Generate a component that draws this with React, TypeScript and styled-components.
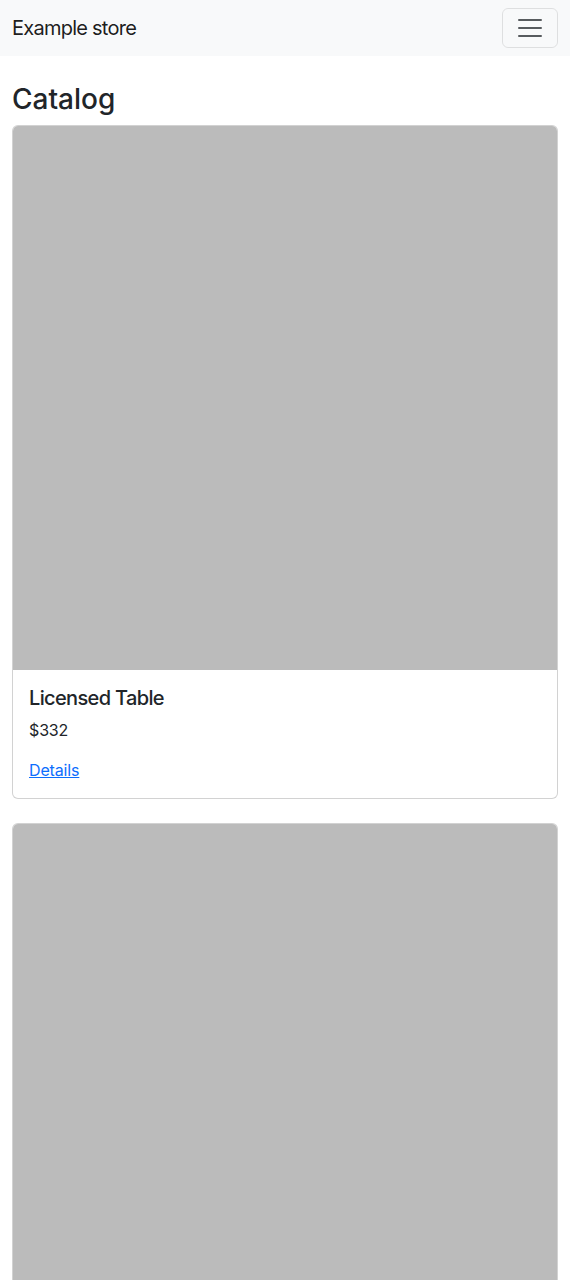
import React from "react";
import styled, { createGlobalStyle } from "styled-components";

type Product = {
  id: number;
  name: string;
  price: number;
};

const products: Product[] = [
  { id: 1, name: "Licensed Table", price: 332 },
  { id: 2, name: "Handcrafted Chair", price: 184 },
];

const GlobalStyle = createGlobalStyle`
  * {
    box-sizing: border-box;
  }
  body {
    margin: 0;
    font-family: Inter, "Liberation Sans", sans-serif;
    font-size: 16px;
    line-height: 1.5;
    letter-spacing: -0.15px;
    color: #212529;
    background: #ffffff;
  }
`;

const Navbar = styled.nav`
  background: #f8f9fa;
  padding: 8px 12px;
  display: flex;
  align-items: center;
  justify-content: space-between;
`;

const Brand = styled.a`
  font-size: 20px;
  line-height: 30px;
  letter-spacing: -0.75px;
  padding: 5px 0;
  color: rgba(0, 0, 0, 0.9);
  text-decoration: none;
`;

const Toggler = styled.button`
  width: 56px;
  height: 40px;
  padding: 4px 12px;
  background: transparent;
  border: 1px solid rgba(0, 0, 0, 0.1);
  border-radius: 6px;
  display: flex;
  align-items: center;
  justify-content: center;
  cursor: pointer;
`;

const Main = styled.main`
  padding: 27px 12px 0;
`;

const Heading = styled.h2`
  margin: 0 0 8px;
  font-size: 28px;
  font-weight: 500;
  line-height: 1.2;
  letter-spacing: 0;
`;

const Card = styled.div`
  border: 1px solid rgba(0, 0, 0, 0.175);
  border-radius: 6px;
  overflow: hidden;
  margin-bottom: 24px;
  background: #ffffff;
`;

const CardImage = styled.div`
  aspect-ratio: 1 / 1;
  background: #bbbbbb;
`;

const CardBody = styled.div`
  padding: 16px;
`;

const CardTitle = styled.h5`
  margin: 0 0 8px;
  font-size: 20px;
  font-weight: 500;
  line-height: 1.2;
  letter-spacing: -0.65px;
`;

const CardText = styled.p`
  margin: 0 0 16px;
`;

const DetailsLink = styled.a`
  color: #0d6efd;
  text-decoration: underline;
`;

const TogglerIcon = () => (
  <svg width="30" height="30" viewBox="0 0 30 30">
    <path
      stroke="rgba(33, 37, 41, 0.75)"
      strokeLinecap="round"
      strokeMiterlimit="10"
      strokeWidth="2"
      d="M4 7h22M4 15h22M4 23h22"
    />
  </svg>
);

export default function App() {
  return (
    <>
      <GlobalStyle />
      <Navbar>
        <Brand href="#">Example store</Brand>
        <Toggler aria-label="Toggle navigation">
          <TogglerIcon />
        </Toggler>
      </Navbar>
      <Main>
        <Heading>Catalog</Heading>
        {products.map((p) => (
          <Card key={p.id}>
            <CardImage />
            <CardBody>
              <CardTitle>{p.name}</CardTitle>
              <CardText>${p.price}</CardText>
              <DetailsLink href="#">Details</DetailsLink>
            </CardBody>
          </Card>
        ))}
      </Main>
    </>
  );
}
